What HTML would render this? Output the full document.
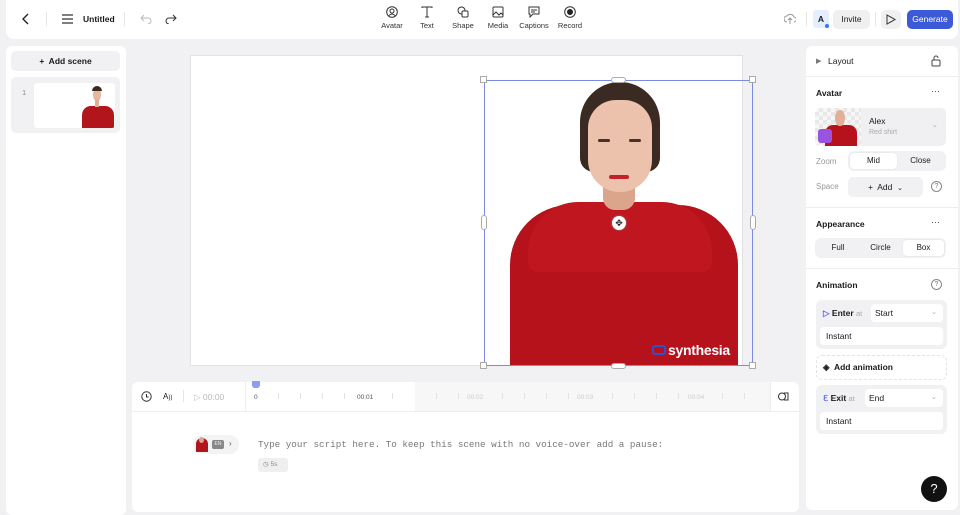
<!DOCTYPE html>
<html><head><meta charset="utf-8"><style>
*{box-sizing:border-box;margin:0;padding:0}
body{width:960px;height:515px;background:#f1f1f3;font-family:"Liberation Sans",sans-serif;color:#1a1a1a;position:relative;overflow:hidden;font-size:8px}
.abs{position:absolute}
.top{left:6px;top:0;width:952px;height:39px;background:#fff;border-radius:0 0 8px 8px}
.tool{position:absolute;top:6px;text-align:center;font-size:7.5px;color:#333;width:40px}
.tool svg{display:block;margin:0 auto 3px}
.panel{background:#fff;border-radius:6px}
.h{font-size:8.5px;font-weight:bold}
.seg{background:#f1f1f3;border-radius:6px;position:absolute;height:20px}
.seg div{position:absolute;top:2px;height:16px;line-height:16px;text-align:center;font-size:8px;border-radius:4px}
.on{background:#fff;box-shadow:0 0 1px #ccc}
.lbl{color:#999;font-size:8px;position:absolute}
.tk{position:absolute;top:393px;width:1px;height:6px;background:#e2e2e2}
</style></head><body>
<div class="abs top">
 <svg class="abs" style="left:15px;top:13px" width="10" height="12"><path d="M7 1L2 6l5 5" stroke="#222" stroke-width="1.4" fill="none"/></svg>
 <div class="abs" style="left:40px;top:12px;width:1px;height:14px;background:#e6e6e6"></div>
 <svg class="abs" style="left:56px;top:14px" width="11" height="10"><path d="M0 1h11M0 5h11M0 9h11" stroke="#333" stroke-width="1.2"/></svg>
 <div class="abs" style="left:77px;top:14px;font-size:8.5px;font-weight:bold">Untitled</div>
 <div class="abs" style="left:118px;top:12px;width:1px;height:14px;background:#e6e6e6"></div>
 <svg class="abs" style="left:134px;top:14px" width="12" height="10"><path d="M4 1L1 4l3 3M1 4h7a3 3 0 010 6" stroke="#bbb" fill="none"/></svg>
 <svg class="abs" style="left:159px;top:14px" width="12" height="10"><path d="M8 1l3 3-3 3M11 4H4a3 3 0 000 6" stroke="#333" fill="none"/></svg>
 <div class="tool" style="left:366px"><svg width="12" height="12"><circle cx="6" cy="6" r="5.3" stroke="#333" fill="none"/><circle cx="6" cy="5" r="2" stroke="#333" fill="none"/><path d="M3 9.5q3-3 6 0" stroke="#333" fill="none"/></svg>Avatar</div>
 <div class="tool" style="left:401px"><svg width="12" height="12"><path d="M1 2V1h10v1M6 1v10M4 11h4" stroke="#333" fill="none"/></svg>Text</div>
 <div class="tool" style="left:437px"><svg width="12" height="12"><circle cx="4.5" cy="4.5" r="3.5" stroke="#333" fill="none"/><rect x="5" y="5" width="6" height="6" rx="1" stroke="#333" fill="#fff"/></svg>Shape</div>
 <div class="tool" style="left:472px"><svg width="12" height="12"><rect x="1" y="1" width="10" height="10" rx="1" stroke="#333" fill="none"/><path d="M1 9l3-3 3 3 2-2 2 2" stroke="#333" fill="none"/></svg>Media</div>
 <div class="tool" style="left:508px"><svg width="12" height="12"><path d="M1 1h10v7H5l-3 3V8H1z" stroke="#333" fill="none"/><path d="M3 4h6M3 6h4" stroke="#333"/></svg>Captions</div>
 <div class="tool" style="left:544px"><svg width="12" height="12"><circle cx="6" cy="6" r="5.3" stroke="#333" fill="none"/><circle cx="6" cy="6" r="3" fill="#222"/></svg>Record</div>
 <svg class="abs" style="left:778px;top:13px" width="12" height="12"><path d="M3 9a3 3 0 010-6 4 4 0 017 1 2.5 2.5 0 010 5M6 11V5M4 7l2-2 2 2" stroke="#999" fill="none"/></svg>
 <div class="abs" style="left:800px;top:12px;width:1px;height:14px;background:#e6e6e6"></div>
 <div class="abs" style="left:807px;top:10px;width:16px;height:18px;background:#e3efff;border-radius:3px;font-size:8.5px;font-weight:bold;text-align:center;line-height:18px">A</div>
 <div class="abs" style="left:819px;top:24px;width:4px;height:4px;background:#2c7df6;border-radius:50%"></div>
 <div class="abs" style="left:827px;top:10px;width:37px;height:19px;background:#f0f0f0;border-radius:5px;font-size:8.5px;text-align:center;line-height:19px;font-weight:500">Invite</div>
 <div class="abs" style="left:869px;top:12px;width:1px;height:14px;background:#e6e6e6"></div>
 <div class="abs" style="left:875px;top:10px;width:20px;height:19px;background:#f0f0f0;border-radius:5px"></div>
 <svg class="abs" style="left:880px;top:14px" width="10" height="11"><path d="M1 1l8 4.5L1 10z" stroke="#333" fill="none"/></svg>
 <div class="abs" style="left:901px;top:10px;width:46px;height:19px;background:#3c5ad8;border-radius:5px;color:#fff;font-size:8.5px;text-align:center;line-height:19px">Generate</div>
</div>

<div class="abs panel" style="left:6px;top:46px;width:120px;height:469px"></div>
<div class="abs" style="left:11px;top:51px;width:109px;height:20px;background:#f1f1f3;border-radius:5px;font-size:8.5px;font-weight:bold;text-align:center;line-height:20px">+&nbsp; Add scene</div>
<div class="abs" style="left:11px;top:77px;width:109px;height:56px;background:#f1f1f3;border-radius:5px"></div>
<div class="abs" style="left:22px;top:88px;font-size:7.5px;color:#888">1</div>
<div class="abs" style="left:34px;top:83px;width:81px;height:45px;background:#fff;border-radius:3px;overflow:hidden">
 <div class="abs" style="left:48px;top:23px;width:32px;height:24px;background:#b3151c;border-radius:9px 9px 0 0"></div>
 <div class="abs" style="left:59px;top:5px;width:8px;height:13px;background:#e6b7a0;border-radius:45%"></div>
 <div class="abs" style="left:58px;top:3px;width:10px;height:5px;background:#3a2a22;border-radius:5px 5px 0 0"></div>
 <div class="abs" style="left:61px;top:16px;width:4px;height:8px;background:#e0ad95"></div>
</div>

<!-- canvas -->
<div class="abs" style="left:190px;top:55px;width:553px;height:311px;background:#fff;border:1px solid #e2e2e2"></div>
<div class="abs" style="left:484px;top:80px;width:269px;height:286px;overflow:hidden">
 <div class="abs" style="left:26px;top:125px;width:228px;height:180px;background:#b5121b;border-radius:60px 60px 0 0"></div>
 <div class="abs" style="left:44px;top:122px;width:184px;height:70px;background:#c0161f;border-radius:50px 50px 10px 10px"></div>
 <div class="abs" style="left:119px;top:90px;width:32px;height:40px;background:#dba58c;border-radius:0 0 12px 12px"></div>
 <div class="abs" style="left:96px;top:2px;width:80px;height:90px;background:#3b2a22;border-radius:40px 40px 14px 14px"></div>
 <div class="abs" style="left:104px;top:20px;width:64px;height:92px;background:#ecc2ad;border-radius:28px 28px 32px 32px"></div>
 <div class="abs" style="left:125px;top:95px;width:20px;height:4px;background:#c4202a;border-radius:3px"></div>
 <div class="abs" style="left:114px;top:59px;width:12px;height:3px;background:#4a3028;border-radius:2px"></div>
 <div class="abs" style="left:145px;top:59px;width:12px;height:3px;background:#4a3028;border-radius:2px"></div>
 <div class="abs" style="left:168px;top:262px;font-size:14px;color:#fff;font-weight:bold;letter-spacing:-.3px"><span style="display:inline-block;width:14px;height:10px;border:2px solid #3050d0;border-radius:3px;margin-right:2px"></span>synthesia</div>
</div>
<div class="abs" style="left:484px;top:80px;width:269px;height:286px;border:1px solid #7a8ce0"></div>
<div class="abs" style="left:480px;top:76px;width:7px;height:7px;background:#fff;border:1px solid #aaa"></div>
<div class="abs" style="left:749px;top:76px;width:7px;height:7px;background:#fff;border:1px solid #aaa"></div>
<div class="abs" style="left:480px;top:362px;width:7px;height:7px;background:#fff;border:1px solid #aaa"></div>
<div class="abs" style="left:749px;top:362px;width:7px;height:7px;background:#fff;border:1px solid #aaa"></div>
<div class="abs" style="left:611px;top:77px;width:15px;height:6px;background:#fff;border:1px solid #aaa;border-radius:3px"></div>
<div class="abs" style="left:611px;top:363px;width:15px;height:6px;background:#fff;border:1px solid #aaa;border-radius:3px"></div>
<div class="abs" style="left:481px;top:215px;width:6px;height:15px;background:#fff;border:1px solid #aaa;border-radius:3px"></div>
<div class="abs" style="left:750px;top:215px;width:6px;height:15px;background:#fff;border:1px solid #aaa;border-radius:3px"></div>
<div class="abs" style="left:612px;top:216px;width:14px;height:14px;background:#fff;border-radius:50%;box-shadow:0 0 2px #888;font-size:9px;text-align:center;line-height:14px">✥</div>

<!-- timeline -->
<div class="abs panel" style="left:132px;top:382px;width:667px;height:130px"></div>
<div class="abs" style="left:132px;top:411px;width:667px;height:1px;background:#eee"></div>
<div class="abs" style="left:245px;top:382px;width:1px;height:29px;background:#eee"></div>
<div class="abs" style="left:415px;top:382px;width:355px;height:29px;background:#f7f7f8"></div>
<div class="abs" style="left:770px;top:382px;width:1px;height:29px;background:#eee"></div>
<div class="tk" style="left:278px"></div><div class="tk" style="left:300px"></div><div class="tk" style="left:322px"></div><div class="tk" style="left:344px"></div><div class="tk" style="left:392px"></div>
<div class="tk" style="left:436px"></div><div class="tk" style="left:458px"></div><div class="tk" style="left:502px"></div><div class="tk" style="left:524px"></div><div class="tk" style="left:546px"></div><div class="tk" style="left:568px"></div>
<div class="tk" style="left:612px"></div><div class="tk" style="left:634px"></div><div class="tk" style="left:656px"></div><div class="tk" style="left:678px"></div><div class="tk" style="left:722px"></div><div class="tk" style="left:744px"></div>
<svg class="abs" style="left:141px;top:391px" width="11" height="11"><circle cx="5.5" cy="5.5" r="4.7" stroke="#333" fill="none"/><path d="M5.5 3v3h2" stroke="#333" fill="none"/></svg>
<div class="abs" style="left:163px;top:392px;font-size:8px">A<span style="font-size:6px">))</span></div>
<div class="abs" style="left:183px;top:390px;width:1px;height:12px;background:#e6e6e6"></div>
<div class="abs" style="left:194px;top:392px;font-size:8.5px;color:#bbb">▷ 00:00</div>
<div class="abs" style="left:252px;top:381px;width:8px;height:7px;background:#8d9cf0;border-radius:0 0 3px 3px"></div>
<div class="abs" style="left:254px;top:394px;font-size:6.5px;color:#555">0</div>
<div class="abs" style="left:357px;top:394px;font-size:6.5px;color:#555">00:01</div>
<div class="abs" style="left:467px;top:394px;font-size:6.5px;color:#ccc">00:02</div>
<div class="abs" style="left:577px;top:394px;font-size:6.5px;color:#ccc">00:03</div>
<div class="abs" style="left:688px;top:394px;font-size:6.5px;color:#ccc">00:04</div>
<svg class="abs" style="left:778px;top:391px" width="11" height="11"><circle cx="4" cy="5.5" r="3.5" stroke="#333" fill="none"/><path d="M6 2h4v7H6" stroke="#333" fill="none"/></svg>
<div class="abs" style="left:193px;top:435px;width:46px;height:19px;background:#f3f3f3;border-radius:10px"></div>
<div class="abs" style="left:196px;top:438px;width:12px;height:14px;background:#b5121b;border-radius:6px 6px 0 0"></div>
<div class="abs" style="left:199px;top:437px;width:5px;height:6px;background:#d9a48c;border-radius:50%"></div>
<div class="abs" style="left:212px;top:440px;width:12px;height:9px;background:#888;border-radius:2px;color:#eee;font-size:5px;text-align:center;line-height:9px">EN</div>
<div class="abs" style="left:229px;top:439px;font-size:8px;color:#555">›</div>
<div class="abs" style="left:258px;top:439px;font-family:'Liberation Mono',monospace;font-size:9.25px;color:#777">Type your script here. To keep this scene with no voice-over add a pause:</div>
<div class="abs" style="left:258px;top:458px;width:30px;height:14px;background:#efefef;border-radius:3px;font-size:6.5px;color:#888;line-height:14px;padding-left:5px">◷ 5s</div>

<!-- right panel -->
<div class="abs panel" style="left:806px;top:46px;width:152px;height:464px"></div>
<div class="abs" style="left:816px;top:57px;font-size:7px;color:#777">▶</div>
<div class="abs h" style="left:828px;top:56px;font-weight:500">Layout</div>
<svg class="abs" style="left:931px;top:55px" width="10" height="12"><path d="M3 5V3a2 2 0 014 0" stroke="#444" fill="none"/><rect x="1" y="5" width="8" height="6" rx="1" stroke="#444" fill="none"/></svg>
<div class="abs" style="left:806px;top:76px;width:152px;height:1px;background:#eee"></div>
<div class="abs h" style="left:816px;top:88px">Avatar</div>
<div class="abs" style="left:931px;top:86px;font-size:9px;color:#444">···</div>
<div class="abs" style="left:815px;top:108px;width:131px;height:38px;background:#f0f0f2;border-radius:5px;overflow:hidden">
 <div class="abs" style="left:0;top:0;width:46px;height:38px;background:repeating-conic-gradient(#e8e8e8 0 25%,#f6f6f6 0 50%) 0 0/8px 8px"></div>
 <div class="abs" style="left:10px;top:17px;width:32px;height:22px;background:#b5121b;border-radius:8px 8px 0 0"></div>
 <div class="abs" style="left:20px;top:2px;width:10px;height:16px;background:#e2b09a;border-radius:45%"></div>
 <div class="abs" style="left:3px;top:21px;width:14px;height:14px;background:#9a52e0;border-radius:3px"></div>
 <div class="abs" style="left:54px;top:8px;font-size:8.5px;font-weight:500">Alex</div>
 <div class="abs" style="left:54px;top:21px;font-size:7px;color:#aaa">Red shirt</div>
 <div class="abs" style="left:117px;top:13px;font-size:7px;color:#aaa">⌄</div>
</div>
<div class="lbl" style="left:816px;top:157px">Zoom</div>
<div class="seg" style="left:848px;top:151px;width:98px"><div class="on" style="left:2px;width:47px">Mid</div><div style="left:49px;width:47px">Close</div></div>
<div class="lbl" style="left:816px;top:182px">Space</div>
<div class="abs" style="left:848px;top:177px;width:75px;height:20px;background:#f1f1f3;border-radius:5px;font-size:8.5px;font-weight:500;text-align:center;line-height:20px">+&nbsp; Add &nbsp;<span style="font-size:7px">⌄</span></div>
<div class="abs" style="left:931px;top:181px;width:11px;height:11px;border:1px solid #888;border-radius:50%;font-size:7px;text-align:center;line-height:9px;color:#777">?</div>
<div class="abs" style="left:806px;top:207px;width:152px;height:1px;background:#eee"></div>
<div class="abs h" style="left:816px;top:219px">Appearance</div>
<div class="abs" style="left:931px;top:217px;font-size:9px;color:#444">···</div>
<div class="seg" style="left:815px;top:238px;width:131px"><div style="left:2px;width:42px">Full</div><div style="left:44px;width:43px">Circle</div><div class="on" style="left:88px;width:41px">Box</div></div>
<div class="abs" style="left:806px;top:268px;width:152px;height:1px;background:#eee"></div>
<div class="abs h" style="left:816px;top:280px">Animation</div>
<div class="abs" style="left:931px;top:279px;width:11px;height:11px;border:1px solid #888;border-radius:50%;font-size:7px;text-align:center;line-height:9px;color:#777">?</div>
<div class="abs" style="left:816px;top:300px;width:131px;height:49px;background:#f1f1f3;border-radius:6px"></div>
<div class="abs" style="left:823px;top:308px;font-size:8.5px;font-weight:bold"><span style="color:#5b6ee8">▷</span> Enter <span style="color:#aaa;font-weight:normal;font-size:7.5px">at</span></div>
<div class="abs" style="left:871px;top:304px;width:72px;height:18px;background:#fff;border-radius:4px;font-size:8.5px;line-height:18px;padding-left:4px">Start<span style="float:right;margin-right:6px;color:#aaa;font-size:7px">⌄</span></div>
<div class="abs" style="left:820px;top:327px;width:123px;height:18px;background:#fff;border-radius:4px;font-size:8.5px;line-height:18px;padding-left:6px">Instant</div>
<div class="abs" style="left:816px;top:355px;width:131px;height:25px;border:1px dashed #e4e4e4;border-radius:6px;font-size:8.5px;font-weight:bold;line-height:23px;padding-left:6px">◈&nbsp; Add animation</div>
<div class="abs" style="left:816px;top:385px;width:131px;height:49px;background:#f1f1f3;border-radius:6px"></div>
<div class="abs" style="left:823px;top:393px;font-size:8.5px;font-weight:bold"><span style="color:#5b6ee8">ℇ</span> Exit <span style="color:#aaa;font-weight:normal;font-size:7.5px">at</span></div>
<div class="abs" style="left:865px;top:389px;width:78px;height:18px;background:#fff;border-radius:4px;font-size:8.5px;line-height:18px;padding-left:4px">End<span style="float:right;margin-right:6px;color:#aaa;font-size:7px">⌄</span></div>
<div class="abs" style="left:820px;top:412px;width:123px;height:18px;background:#fff;border-radius:4px;font-size:8.5px;line-height:18px;padding-left:6px">Instant</div>
<div class="abs" style="left:921px;top:476px;width:26px;height:26px;background:#111;border-radius:50%;color:#fff;font-size:13px;text-align:center;line-height:26px">?</div>
</body></html>
